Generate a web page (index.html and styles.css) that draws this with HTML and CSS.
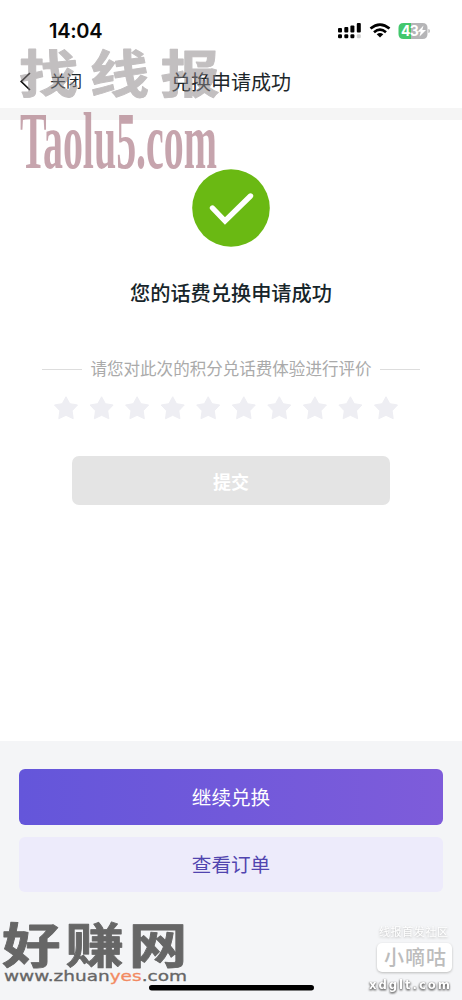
FILE: index.html
```html
<!DOCTYPE html>
<html lang="zh-CN">
<head>
<meta charset="UTF-8">
<title>兑换申请成功</title>
<link rel="stylesheet" href="styles.css">
</head>
<body>
<div class="screen">
  <div class="status">
    <span class="time">14:04</span>
    <svg class="indicators" width="94" height="18" viewBox="0 0 94 18">
      <g fill="#000">
        <rect x="2" y="6" width="4" height="4.500" rx="1"/><rect x="8.300" y="5" width="4" height="5.500" rx="1"/><rect x="14.400" y="3.500" width="4" height="7" rx="1"/><rect x="20.800" y="1" width="4" height="9.500" rx="1"/>
        <rect x="2" y="12.300" width="4" height="4" rx="1.200"/><rect x="8.300" y="12.300" width="4" height="4" rx="1.200"/><rect x="14.400" y="12.300" width="4" height="4" rx="1.200"/>
        <rect x="20.800" y="12.300" width="4" height="4" rx="1.200" fill="#d0d0d0"/>
      </g>
      <g fill="none" stroke="#000" stroke-width="2.600">
        <path d="M34.500 6.600Q44 -1.400 53.500 6.600"/><path d="M38 10.300Q44 5 50 10.300"/>
      </g>
      <path d="M40.700 12.300Q44 9.500 47.300 12.300L44 15.600Z"/>
      <path d="M75 1H67.500Q62.500 1 62.500 6V12Q62.500 17 67.500 17H75Z" fill="#43c76c"/>
      <path d="M75 1H86.500Q91.500 1 91.500 6V12Q91.500 17 86.500 17H75Z" fill="#b5b5b7"/>
      <path d="M92.300 7Q94 7.200 94 9T92.300 11Z" fill="#bbb"/>
      <text class="battery-text" x="65" y="14">43</text>
      <path d="M87.500 3.500L81.500 9.800H84.700L83.500 14.500L90 8H86.300Z" fill="#fff"/>
    </svg>
  </div>
  <header class="nav">
    <div class="back">
      <svg width="12" height="20" viewBox="0 0 12 20"><path d="M10 1L1.200 9.500L10 18" fill="none" stroke="#111" stroke-width="1.700"/></svg>
      <span>关闭</span>
    </div>
    <h1>兑换申请成功</h1>
  </header>
  <main class="content">
    <svg class="check" width="78" height="78" viewBox="0 0 78 78"><circle cx="39" cy="39" r="38.800" fill="#6ab913"/><path d="M20.500 39L33 52L58.500 27" fill="none" stroke="#fff" stroke-width="5.400" stroke-linecap="round"/></svg>
    <h2>您的话费兑换申请成功</h2>
    <div class="prompt"><i></i><span>请您对此次的积分兑话费体验进行评价</span><i></i></div>
    <svg class="stars" width="346" height="26" viewBox="0 0 346 26">
      <defs><path id="star" d="M0 -11.200L3.800 -4.300L11.500 -3L6.100 2.800L7.200 10.700L0 7.300L-7.200 10.700L-6.100 2.800L-11.500 -3L-3.800 -4.300Z" fill="#eeeef3" stroke="#eeeef3" stroke-linejoin="round"/></defs>
      <use href="#star" x="13" y="13"/><use href="#star" x="48.600" y="13"/><use href="#star" x="84.100" y="13"/><use href="#star" x="119.700" y="13"/><use href="#star" x="155.200" y="13"/><use href="#star" x="190.800" y="13"/><use href="#star" x="226.300" y="13"/><use href="#star" x="261.900" y="13"/><use href="#star" x="297.400" y="13"/><use href="#star" x="333" y="13"/>
    </svg>
    <button class="submit">提交</button>
  </main>
  <footer class="actions">
    <button class="primary">继续兑换</button>
    <button class="secondary">查看订单</button>
  </footer>
  <svg class="watermarks" width="462" height="1000" viewBox="0 0 462 1000">
    <g class="wm-hei"><text transform="translate(19 93) scale(1.080 .93)" x="0 65.500 131">找线报</text></g>
    <text class="wm-serif" x="20" y="168" textLength="197" lengthAdjust="spacingAndGlyphs">Taolu5.com</text>
    <text class="wm-zhuan" transform="translate(2 962.500) scale(1.220 1)" x="0 52 104">好赚网</text>
    <text class="wm-url" x="4" y="980.700" textLength="183" lengthAdjust="spacingAndGlyphs">www.zhuan<tspan class="accent">yes</tspan>.com</text>
    <g class="wm-shadow">
      <text class="wm-tag" x="379" y="936" textLength="69">线报首发社区</text>
      <rect x="377" y="943" width="75" height="29" rx="5" fill="#fff"/>
    </g>
    <text class="wm-name" x="384" y="965" textLength="62">小嘀咕</text>
    <text class="wm-site" x="369" y="989" textLength="81">xdglt.com</text>
    <rect x="149" y="985" width="165" height="5.500" rx="2.750" fill="#000"/>
  </svg>
</div>
</body>
</html>
```
FILE: styles.css
```css
* { box-sizing: border-box; }
body { margin: 0; font-family: "Liberation Sans", "Noto Sans CJK SC", sans-serif; background: #fff; }
.screen { position: relative; width: 462px; height: 1000px; overflow: hidden; display: flex; flex-direction: column; }
.status { height: 56px; padding: 20px 32px 0 49px; display: flex; justify-content: space-between; align-items: flex-start; }
.time { font: 600 20px/22px Inter, sans-serif; color: #080808; letter-spacing: -.3px; }
.indicators { margin-top: 2px; }
.battery-text { font: 700 14px Inter, sans-serif; fill: #fff; letter-spacing: -.8px; }
.nav { height: 64px; padding: 0 20px; border-bottom: 12px solid #f5f5f5; display: grid; grid-template-columns: 1fr auto 1fr; align-items: center; color: #1d272b; }
.back { display: flex; align-items: center; gap: 18px; font-size: 16px; line-height: 24px; }
.nav h1 { margin: 0; padding-top: 2px; font-size: 20px; font-weight: 400; line-height: 28px; }
.content { height: 621px; display: flex; flex-direction: column; align-items: center; padding-top: 49px; }
.check { flex: none; }
.content h2 { margin: 32px 0 0; font-size: 20.2px; line-height: 30px; font-weight: 500; color: #17252a; }
.prompt { display: flex; align-items: center; gap: 8px; margin-top: 48px; height: 24px; font-size: 16.550px; line-height: 24px; color: #aaa; white-space: nowrap; }
.prompt span { padding-top: 2px; }
.prompt i { width: 40px; height: 1px; background: #ddd; }
.stars { margin: 14px 0 0 -10px; flex: none; }
.submit { width: 318px; height: 49px; margin-top: 35px; border: 0; border-radius: 7px; background: #e4e4e4; color: #fff; font: 700 18px "Noto Sans CJK SC", sans-serif; }
.actions { flex: 1; background: #f4f5f7; padding: 28px 19px 0; display: flex; flex-direction: column; gap: 12px; }
.actions button { border: 0; border-radius: 6px; font: 400 19.600px "Noto Sans CJK SC", sans-serif; padding: 0 0 2px; }
.primary { height: 56px; background: linear-gradient(90deg, #6456da, #7e5cda); color: #fff; }
.secondary { height: 55px; background: #edebfb; color: #5145af; }
.watermarks { position: absolute; inset: 0; pointer-events: none; }
.wm-hei { font: 700 55px "Noto Sans CJK SC", sans-serif; fill: #8b8587; stroke: #8b8587; stroke-linejoin: round; stroke-width: 1px; opacity: .52; }
.wm-serif { font: 700 80px "Liberation Serif", serif; fill: #a97582; opacity: .65; }
.wm-zhuan { font: 700 48px "Noto Sans CJK SC", sans-serif; fill: #666; stroke: #666; stroke-width: .8px; stroke-linejoin: round; }
.wm-url { font: 400 14px "DejaVu Sans", sans-serif; fill: #666; stroke: #666; stroke-width: .3px; }
.accent { fill: #f28a62; stroke: #f28a62; }
.wm-shadow { filter: drop-shadow(0 1px 1px #bbb); }
.wm-tag { font: 400 11px "Noto Sans CJK SC", sans-serif; fill: #fff; }
.wm-name { font: 500 20px "Noto Sans CJK SC", sans-serif; fill: #bcbcbc; }
.wm-site { font: 700 13px "DejaVu Sans Condensed", "DejaVu Sans", sans-serif; fill: #fff; filter: drop-shadow(0 1px 1px #555) drop-shadow(0 0 .5px #888); }
```
